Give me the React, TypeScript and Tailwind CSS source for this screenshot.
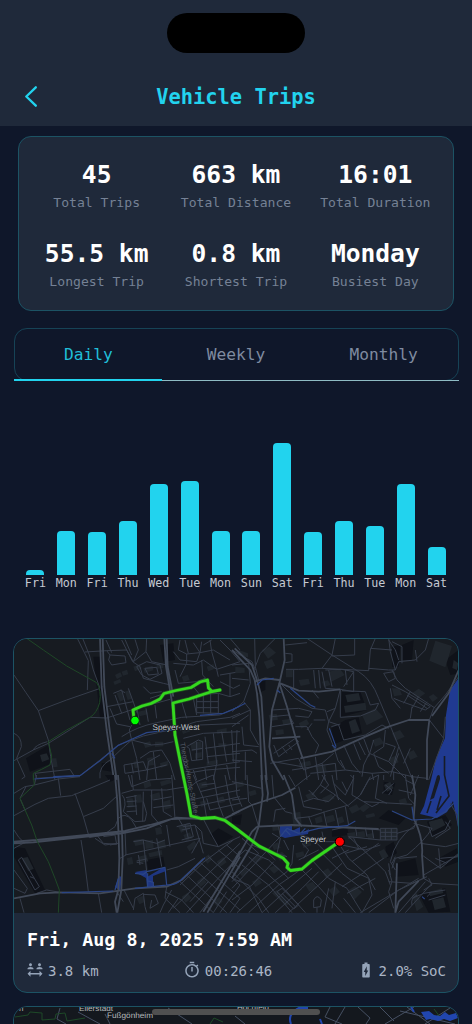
import { MdBatteryChargingFull, MdOutlineTimer, MdSocialDistance } from 'react-icons/md';

const stats = [
  { value: '45', label: 'Total Trips' },
  { value: '663 km', label: 'Total Distance' },
  { value: '16:01', label: 'Total Duration' },
  { value: '55.5 km', label: 'Longest Trip' },
  { value: '0.8 km', label: 'Shortest Trip' },
  { value: 'Monday', label: 'Busiest Day' },
];

const bars = [
  { day: 'Fri', height: 4.7 },
  { day: 'Mon', height: 43.7 },
  { day: 'Fri', height: 43 },
  { day: 'Thu', height: 53.7 },
  { day: 'Wed', height: 91 },
  { day: 'Tue', height: 93.7 },
  { day: 'Mon', height: 43.3 },
  { day: 'Sun', height: 43.7 },
  { day: 'Sat', height: 132 },
  { day: 'Fri', height: 43 },
  { day: 'Thu', height: 53.7 },
  { day: 'Tue', height: 48.7 },
  { day: 'Mon', height: 91 },
  { day: 'Sat', height: 27.7 },
];

// Each tile is drawn at 3x and placed on the map by x / y.
const tiles = [
  {
    x: 0,
    y: 630,
    dark: 'M78 385L145 345L155 400L90 425ZM305 400L335 395L335 425L305 420ZM480 45L520 40L525 90L490 95ZM280 80L305 80L325 260L300 262Z',
    buildings:
      'M120 375l20-5 8 18-22 8zM155 385l14 0 4 25-14 2zM345 135l16-8 6 12-16 8zM365 125l16-6 4 14-16 4zM400 110l20-8 5 14-20 8zM430 115l28-8 2 14-26 8zM470 100l20 0 0 14-20 2zM350 190l14-6 8 25-12 6zM375 185l12-4 8 25-12 4zM415 245l25-6 4 14-25 6zM340 155l20-8 4 10-20 8zM430 340l20-6 6 14-20 6zM465 335l25 0 0 14-25 2zM570 340l34-6 2 24-30 6zM585 370l20-4 0 16-20 4zM545 300l24-8 2 12-22 8zM400 395l14-2 4 20-14 2zM440 385l18-4 4 24-16 2zM480 400l24-8 2 14-24 8zM620 110l20-8 5 14-20 8zM545 140l18-6 6 16-18 6zM650 300l30-6 0 12-28 6zM655 340l24 0 0 12-24 0zM620 395l34-6 0 14-34 4z',
    green: 'M80 25L130 60L200 108L290 158Q305 180 299 218Q290 250 270 262L200 300L145 335L155 378L150 405L125 418L100 430V450',
    blue: 'M240 437L300 392L355 346L390 330L440 308L490 302L530 300M600 256L670 250L700 238L720 228M335 370L345 385M160 440L240 437',
    major: 'M300 25L305 170L320 300L342 450M308 25L313 170L329 300L350 450M493 25L498 110L514 205L525 285M500 25L503 110L520 200',
    streets: [
      'M232 25L265 92L262 180M248 25L268 75L280 120L300 175M42 135L78 188L115 242L145 330L152 380L165 450M115 242L200 210L298 176M255 66L320 62L380 60L400 95M42 392L100 360L145 340L270 262L320 264L400 238L510 208',
      'M42 310Q65 320 64 350L50 385L75 440L65 447M105 430L210 418L222 437L110 445ZM100 360Q105 345 142 335M365 320Q410 290 470 278L545 262L660 255L720 228M240 437L300 390L355 345L430 318L500 302L590 275L690 262L720 250',
      'M318 30L335 68M330 75L375 78L378 98L335 105L326 90ZM330 75L320 62M365 30L380 60L398 95L420 110L430 145L490 160L512 165M375 28L395 75M405 28L415 60L400 95M440 25L438 65L400 95M438 65L455 95L500 105',
      'M410 110L440 95L480 105L486 130L450 148L425 135ZM435 115L470 112L475 132L445 135ZM340 190L365 180L390 270M360 180L375 188M385 175L412 250M330 235L350 282L390 290M345 195L365 250M320 230L400 215M412 240L420 285M438 235L445 275M465 225L470 265M430 170L450 190L485 185',
      'M450 205L510 185M520 100L580 105L610 90L650 118L720 95M525 120L535 160L590 155L615 145M540 30L535 60L560 72L600 68L640 60L690 90M520 65L540 90L590 95L600 68L605 35M560 72L560 100L540 140M630 30L635 65L650 118L655 140M605 90L608 135L640 170M555 30L565 70',
      'M590 195L655 190L655 250L590 248ZM610 195V250M632 190V250M590 215H655M590 233H655M660 135L720 125M660 155L700 175L720 165M655 190L690 200L720 190M690 130L690 200',
      'M660 30L690 60L720 95M690 25L720 60M610 45L635 30M580 38L600 68M395 330L388 300L395 285M395 330L410 385L420 450M395 330L455 345L490 342L520 335M420 385L450 365L485 360L510 400L525 450M372 405L430 395L440 420L375 430L372 405M395 400L400 430M300 445Q295 410 330 390L370 352L395 330',
      'M540 300L600 285L720 280M550 325L610 310L720 305M560 350L595 330L608 335L608 388L575 392L568 355ZM575 360L608 355M590 335V390M545 380L560 420L720 395M615 320L625 400M640 310L650 400L640 450M665 305L680 395M695 300L700 395M560 430L620 420L720 412M580 420L590 450M615 415L620 450M680 405L690 450M615 355L720 340M620 380L720 370',
      'M440 420L500 405M460 365L470 450M440 450L445 395L480 375M545 215L560 265M580 205L590 255M540 180L580 170L600 195',
    ],
  },
  {
    x: 232,
    y: 630,
    dark: 'M330 185L385 185L405 240L325 262ZM340 270L380 262L390 310L300 345L298 295ZM510 45L545 30L540 90L510 90ZM480 50L505 45L500 110L480 110ZM640 90L680 60L680 130L655 135ZM70 150L100 150L100 180L75 190Z',
    buildings:
      'M610 32L660 48L640 112L592 92ZM665 90l14 10-4 20-14-6zM90 60l22-10 20 18-24 18zM95 95l25-8 10 20-25 10zM162 120l20 0 0 22-20 0zM200 150l30-4 4 16-28 6zM290 125l34-8 14 18-40 20zM270 155l18-4 8 14-20 6zM340 195l40-6 6 22-40 6zM336 228l64-10 4 22-64 8zM390 255l40-20 24 26-50 25zM350 275l20-8 14 36-24 8zM110 255l24-4 4 18-24 4zM150 270l24-4 4 16-24 4zM130 300l24-2 2 14-24 4zM200 280l24-12 8 14-24 14zM540 190l20-14 20 14-22 16zM590 200l14-8 14 12-16 12zM480 175l22 0 8 20-24 4zM420 330l24-8 12 18-26 10zM480 310l24-10 14 20-28 12zM525 370l20-10 12 20-22 10zM470 385l22-8 8 20-22 8zM200 400l34-8 4 14-34 8zM250 410l30-4 4 18-30 6zM20 60l28 10 0 12-30-6zM10 110l28 4 0 14-28 2z',
    green: '',
    blue: 'M135 180L145 188M75 165L90 150L125 145M175 175L235 225L250 232M292 295L312 350M300 345L312 355M0 240L40 220',
    major:
      'M0 60L25 88L55 120L68 150L75 190L82 260L85 330L90 450M8 55L60 105L78 160L88 200L96 330L104 450M155 25L158 90L142 160L120 240L112 350L120 390L155 450M142 160L165 230L190 320L212 385M120 325L205 320M205 385L300 365L400 320L470 290L530 270L592 270M145 160L200 182L260 185L325 178M68 155L100 145L142 150M592 270L585 330L585 450M680 120L650 190L600 258',
    streets: [
      'M225 25L300 75L380 125Q420 150 440 205L480 300L540 445M0 60L60 95L70 120M0 105L50 100L55 160L35 215L0 245M35 215L55 240L55 300L80 345M0 145L50 150M68 25L70 110L80 150M160 45L225 38M130 25L85 70L70 110',
      'M310 25L300 75L270 115L200 118L162 118M270 115L410 122L415 60L430 25M368 25L368 75L300 78M410 115L470 120L490 120L475 65L470 25M490 120L500 95L550 90L580 60L590 25M270 125L280 175L325 178L310 235L285 245M185 120V175M280 120L330 118L365 125L335 170',
      'M365 125L365 185L325 178L325 262M325 262L385 258L430 240L440 220L415 225L400 185L330 182M160 70L180 72L180 95L160 98M145 160L190 205L240 235L280 240L290 275L285 300L305 350L318 392L335 415M310 235L290 275M290 275L320 285L335 330M298 290L325 282M240 180L260 205M260 120L265 175',
      'M120 240L200 235L240 245L230 262L190 258M120 260L170 255L185 280L120 290M190 290L225 290L240 320L260 345L250 370M245 270L280 270M225 300L240 280M125 345L140 380L200 335L190 325L125 370M150 350L165 370M170 345L180 360M0 265L55 240M0 290L50 255M10 450L15 300M30 290L35 345L80 350',
      'M335 330L400 315L450 285L470 295M335 345L360 400L385 430M365 340L385 390M380 335L400 375M395 325L412 370M410 380L425 330M412 370L470 395L520 445M425 370L440 410L470 430M390 440L395 405L412 370M460 300L455 350L425 370M470 395L490 350L460 340',
      'M480 120L495 150L520 175L610 235M455 130L485 125L490 145L470 155L455 130M480 165L520 185L595 230L580 240L510 215L485 205M535 185L515 220M560 200L540 235M585 215L565 245M525 195L585 235M475 175L480 205L505 235M540 230L535 265L530 270M592 270L605 235L640 195L680 140M592 270L635 325L615 380L590 450',
      'M325 390L340 420L420 430L480 425L540 440L585 445M0 365L60 360L75 370M0 390L60 395M40 365V450M115 400L200 385L215 420L270 400L305 370M215 385L225 450M270 400L280 450M180 420L310 400M250 380L260 450M310 400L315 450M125 395L210 410M235 430L340 420M455 435V450M420 430L425 450M485 425V450M500 370L480 425M475 440L500 350M535 355L515 400M635 325L640 260',
      'M480 35L510 50L510 100M470 30L490 60L500 90M415 55L480 60M555 95L550 60M245 120L250 175M340 120L345 165M290 120L300 170',
    ],
  },
  {
    x: 0,
    y: 775,
    dark: 'M42 215L75 220L135 345L105 355L42 245ZM440 255L490 245L495 275L445 285ZM315 0L345 0L345 15L330 20ZM630 180L655 160L700 185L655 212Z',
    buildings:
      'M400 195l30-4 4 16-28 6zM435 198l24-4 2 24-24 4zM465 160l18-4 4 20-18 4zM470 200l24-6 4 24-24 6zM415 245l24-6 6 20-26 6zM445 235l40-10 2 14-38 8zM380 250l16-4 4 20-16 4zM535 155l30-12 8 16-30 14zM550 180l20-8 8 18-20 8zM560 215l24-18 8 16-24 16zM600 80l16-4 6 14-18 6zM650 70l20-6 6 16-20 6zM450 60l28-8 4 16-28 8zM490 80l20-6 4 24-20 6zM380 70l18 0 4 26-18 2zM405 60l18-2 4 24-18 2zM430 25l20-8 4 16-20 8zM480 20l30-8 4 12-30 10zM595 25l24-6 4 16-24 6zM65 250l18-4 18 35-16 8zM410 370l18-8 8 18-18 8zM610 250l16-12 12 14-16 14zM650 260l20-14 10 16-20 14zM590 320l18-14 12 16-18 14zM545 365l18-12 12 16-18 14zM640 380l18-14 10 14-18 14z',
    green: 'M100 0L103 30L60 70L95 150L112 200L145 260L165 310L178 345L175 413',
    blue: 'M103 12L240 2M185 353L340 348M405 340L520 328Q535 325 550 308L615 248M345 345L355 310M405 295L430 298L440 290L495 277L500 330M443 295V335M445 318L460 322V335',
    major: 'M345 0L352 80L355 165L358 250L355 345L345 380L350 413M354 0L360 75L366 165L368 250L364 345L352 413M42 205L100 202L260 185L365 175L440 160L515 132L570 130M42 200L110 195L260 180L375 168L450 150L530 128L600 132L675 130L720 108M42 370L120 355L180 352L300 355L405 340L500 335L545 315L610 252M610 410L720 228M622 413L720 245',
    streets: [
      'M42 55L75 35L103 30L175 12L240 5M42 122L105 88L145 70L215 62L270 40L330 15M225 55L250 125L268 188M250 125L310 100L352 62M175 10L182 62M103 30L110 0M60 70L78 35M62 75L75 105M42 165Q55 190 75 205M42 220L75 202M268 188L310 180L345 155L355 130',
      'M243 195L255 270L265 350M295 355L305 413M42 340L75 355L82 340L42 285M60 370L72 413M55 255L65 247L118 335L105 345L55 255M90 305L103 310M110 355L140 345L180 352M355 130Q375 110 395 135L410 160M310 185L345 180L350 208L310 205L290 180M285 190L315 210L350 205M330 210L355 205',
      'M365 55L400 45L500 45L560 35M365 60Q375 65 375 90L370 110L405 140L435 138L440 115L430 80M400 45L395 0M430 50L428 140M455 45L455 120L485 155M485 40L490 110L515 125M385 0L395 35L450 15L515 10M515 0L525 130M380 80L410 78M380 95L410 93M380 110L410 108M378 68L410 62M405 60L410 120M460 75L515 65M460 98L520 90',
      'M570 75L720 45M580 95L720 65M580 0L610 70L620 130M560 45L590 20L640 0M640 0L655 85L670 125M675 0L690 80L700 110M605 30L645 25M600 50L720 22M620 70L630 105L720 85M585 118L610 132L635 180L655 215L720 185M535 130L550 155L585 150L605 170L610 205L655 215M585 150L610 235',
      'M375 240L430 228L500 212L600 190M430 195L440 290M470 190L485 275M500 150L510 215M375 170L378 240L360 250M400 200L430 195L470 205L495 195M410 258L440 252M415 240L420 270M430 265L410 262M370 380L350 350M372 345L400 400M405 370L430 355L435 395M430 358L465 360L475 385L450 400L455 375',
      'M500 335L495 370L540 413M495 350L545 375L580 413M540 320L600 375L640 413M560 300L650 385L680 413M580 280L720 405M600 262L720 370M625 245L720 330M655 225L720 280M680 210L720 245M720 205L600 320L520 400M700 195L610 262L540 330M720 240L650 315L560 413M655 340L600 413M680 350L640 413M720 330L660 413M515 345L490 390L480 413M535 370L505 413M720 370L690 413M625 320L570 380',
      'M500 285L535 275L585 250M530 155L570 145L580 185L545 195M545 165L570 160M555 150L565 190M400 405L405 370M435 395L440 413M575 235L600 190',
    ],
  },
  {
    x: 232,
    y: 775,
    dark: 'M495 265L550 250L560 300L490 305ZM460 215L485 200L495 235L465 250ZM560 355L640 340L655 410L590 413ZM440 130L470 105L520 130L500 150ZM620 250L675 220L680 260L640 275ZM300 165L345 155L350 180L300 185ZM0 125L30 118L25 150L0 145ZM455 20L490 25L480 60L455 55ZM585 140L640 120L660 150L600 185Z',
    buildings:
      'M180 115L205 110L210 155L185 158ZM445 160L495 158L495 195L445 195ZM248 130l20-8 4 18-20 6zM280 125l24-6 6 18-24 8zM315 130l16-6 6 16-18 8zM350 100l24-12 10 16-24 12zM345 175l24-4 4 18-24 4zM375 172l22-4 4 18-22 4zM405 178l18-4 4 16-18 4zM440 230l16-8 14 22-18 10zM350 345l20-12 20 18-24 24zM540 360l14-5 20 40-20 14zM590 350l40-10 4 14-40 10zM600 375l34-8 8 30-34 8zM590 140l40-10 10 20-40 20zM210 205l24-8 4 14-24 8zM130 240l20-10 14 14-20 14zM60 250l20-12 14 12-20 14zM110 280l20-10 14 12-18 14zM190 235l24-6 4 14-24 6zM20 290l20-12 10 12-20 14zM60 320l20-10 10 14-20 12zM120 355l14-10 40 40-12 8zM220 330l22-10 14 18-24 12zM270 290l18-10 14 18-20 12zM290 345l20-12 14 18-20 14zM380 100l20-14 14 10-20 16zM400 120l26-6 4 10-26 6zM220 60l24-10 8 14-24 10zM270 70l28-14 10 14-28 14zM120 150l18-4 4 20-20 2zM120 210l18-8 8 16-20 8zM10 25l22-6 4 14-22 6zM50 50l20-6 4 14-20 6zM500 75l20-6 6 14-22 6zM455 30l20-10 10 20-20 10z',
    green: '',
    blue: 'M480 108L540 135L600 132L640 110L665 85M145 185L165 160L200 175L260 160L345 152L370 138M150 180L160 165L175 180M205 175L220 160M540 95L545 130M570 365L578 372',
    major: 'M88 0L92 60L80 155L60 210L0 310M100 0L108 55L105 80M0 118L60 90L150 60L190 38M155 0L180 60L190 130L210 155M75 155L180 150L340 158L440 162M540 0L550 60L545 130Q575 190 570 240L575 310M495 265L490 413M560 318L500 380L490 413M0 275L60 170L75 155',
    streets: [
      'M0 20L50 30L88 40M10 0L15 60L30 95M45 0L50 80L60 90M0 75L45 70M60 90L80 155M120 0L125 65L160 110L180 115M190 130L235 125L280 110L350 90L385 60L415 5M170 0L190 35L215 15L235 0M200 35L215 95L270 105M215 80L245 70L290 80L310 60L350 95M230 45L260 75M240 60L265 30L280 0M265 30L310 60M300 0L305 25L340 60L365 10L355 0',
      'M365 0L360 60L395 80L540 88M385 60L410 15L440 0M440 0L430 70L465 85M520 0L530 70L550 90M560 0L535 60M395 80L420 95L440 85M230 125L240 150M275 110L285 155M310 105L320 155M340 95L350 150M300 165L345 155L445 165M350 185L445 195M370 155L375 185M400 158L405 185M420 160L425 190',
      'M445 160H495V195H445ZM460 160V195M478 160V195M445 172H495M445 184H495M495 175L545 160L555 135M550 150Q490 190 475 260L490 285M545 145L600 160Q580 195 525 240L490 250L480 280M565 205L640 215L680 205M570 240L625 280L680 235M575 300L680 240M575 310L600 325L680 330M575 310L540 325L470 320',
      'M0 340L70 265L130 200L150 180M0 310L50 330L90 413M0 260L40 225L110 255L170 310M30 190L80 235L0 320M60 210L130 240M30 270L110 330L180 413M50 245L160 345L220 413M90 215L130 255M0 375L60 330L125 260M15 413L90 345L165 290M50 413L140 330L200 288M90 413L175 335L240 280M0 290L80 370L110 413M130 413L210 340L260 290M170 413L260 330L330 265',
      'M135 350L150 340L200 390L185 402ZM150 355L190 395M245 375Q255 355 268 375L265 395L245 398ZM255 397V413M210 285L260 335L330 413M240 255L290 310L345 340L390 413M270 235L330 295L395 345M300 215L345 280L410 310L420 360L390 413M320 205L350 250L405 300L430 345M350 185L410 240L460 290L475 330',
      'M205 180L270 200L320 200M270 170L275 195M210 205L230 225L215 250M255 205L285 235M330 210L400 225L445 210M365 190L380 220M340 235L405 215M300 250L350 225M360 260L440 205M395 290L455 250M330 335L400 290M345 355L430 310M385 413L560 310M410 413L500 345L585 305M335 370L370 413M290 340L275 413M310 320L300 400',
      'M500 413L580 320M520 413L600 325M540 370L575 355L640 345M585 365L595 355M590 375L640 360M540 390Q535 370 555 360M480 265L490 245M470 285L480 320L470 350L485 400M470 265L475 300M640 140L655 160L610 190M590 155L600 185L640 165L655 135M610 250L645 265M620 220L625 280M625 250L680 245M500 250L555 245M590 310L600 330L575 345M655 85L675 120L680 160',
      'M130 105L160 100M130 105L125 140M120 175L145 190L135 235L165 245M155 195L170 225M185 210L180 265L165 290M200 255L260 225M140 155L145 185M520 15L550 30M500 45L545 55M460 30L480 45L470 60M450 55L485 25M270 0L290 30L265 55M305 25L320 75M330 20L345 50',
    ],
  },
];

const ROUTE =
  'M134 719L133 710L142 706L151 703.5L160 699L164 693.5L176 690.5L191 687.5L200 682L207.5 680L208.5 688L212 691.5L220 690L212 691.5L189 699L173 703L175 735L181 765L187 794L191 816L201 818.5L215 817.5L225 820.5L238 830L259 846L283 858L288 863.5L287 867.5L290.5 870.5L302 869L312 860.5L339 842';

function TripMap() {
  return (
    <svg viewBox="14 639 444 274" className="block h-[274px] w-full shrink-0" preserveAspectRatio="none">
      <rect x="14" y="639" width="444" height="274" fill="#171b21" />
      {/* Rhine and harbour */}
      <path
        d="M458 679L450 690L446 715L445 738L436 758L431 780L424 806L420 814L437 818L447 812L453 801L458 827Z"
        fill="#203a91"
      />
      <path d="M437 776Q440 773 440 779L434 798L430 800Z" fill="#171c26" />
      <path d="M444.5 756V775L449 796L436 813M431 801L427 813M441 796L437 810" fill="none" stroke="#171c26" strokeWidth="1.6" />
      <path
        d="M280 826L292 825L292 831L300 827L300 834L309 829L308 834L296 836L285 838L280 836ZM135 872L147 870L147 877L164 867L166 871L153 876L153 886L147 887L146 878ZM115 887L119 876L122 877L120 891Z"
        fill="#203d9c"
        opacity=".8"
      />
      {tiles.map((t) => (
        <g key={`${t.x}-${t.y}`} transform={`translate(${t.x} ${t.y}) scale(.33333)`} fill="none" strokeLinejoin="round">
          <path d={t.dark} fill="#0f1219" />
          <path d={t.buildings} fill="#20262d" />
          {t.streets.map((d) => (
            <path key={d} d={d} stroke="#363d4b" strokeWidth="3" />
          ))}
          <path d={t.major} stroke="#414958" strokeWidth="5.4" />
          <path d={t.green} stroke="#1f4727" strokeWidth="3" />
          <path d={t.blue} stroke="#2b4585" strokeWidth="3.6" />
        </g>
      ))}
      <g fill="#565d67" fontFamily="Liberation Sans, Arial, sans-serif" fontSize="7">
        <text transform="translate(180 743) rotate(79)" textLength="72" textRendering="geometricPrecision">
          Theodor-Heuss-Straße
        </text>
      </g>
      <path d={ROUTE} fill="none" stroke="#2c8a20" strokeWidth="4" strokeLinejoin="round" opacity=".5" />
      <path d={ROUTE} fill="none" stroke="#35d91f" strokeWidth="2.8" strokeLinejoin="round" strokeLinecap="round" />
      <circle cx="135" cy="720.5" r="4.3" fill="#00ff00" stroke="#0b220e" strokeWidth="1" />
      <circle cx="339.8" cy="841.7" r="4.6" fill="#ff0000" stroke="#000" strokeWidth="1" />
      <g
        fill="#c4c7cb"
        stroke="#171b21"
        strokeWidth="1.5"
        paintOrder="stroke"
        fontFamily="Liberation Sans, Arial, sans-serif"
        fontSize="8.2"
        textRendering="geometricPrecision"
      >
        <text x="152.5" y="730.3" textLength="47" lengthAdjust="spacingAndGlyphs">
          Speyer-West
        </text>
        <text x="300" y="841.8" textLength="26" lengthAdjust="spacingAndGlyphs">
          Speyer
        </text>
      </g>
    </svg>
  );
}

function NextTripMap() {
  return (
    <svg viewBox="14 1007 444 17" className="block h-[17px] w-full" preserveAspectRatio="none">
      <rect x="14" y="1007" width="444" height="17" fill="#14181e" />
      <path
        d="M60 1008L57 1019L66 1024M78 1012L100 1024M105 1014L110 1024M168 1008L192 1024M235 1016L245 1024M330 1007L325 1017L342 1024M345 1007L335 1024M358 1007L370 1018L366 1024M380 1007L394 1021M385 1024L414 1007M407 1007L430 1024M400 1011L455 1024M425 1024L450 1008"
        fill="none"
        stroke="#465063"
      />
      <path
        d="M15 1017L28 1015L30 1012L42 1013L42 1020L55 1019L56 1014L65 1013L67 1021L85 1018M210 1024L214 1018L223 1022M434 1009L440 1017L450 1016"
        fill="none"
        stroke="#1e4928"
      />
      <path
        d="M291 1024Q287 1014 299 1008L308 1008M320 1019L322 1024M411 1007L414 1012"
        fill="none"
        stroke="#2146ae"
        strokeWidth="2"
      />
      <path d="M421 1012L429 1011L434 1015L440 1016L445 1012L449 1015L456 1013L458 1018L450 1021L444 1019L438 1021L430 1019L426 1020Z" fill="#2146ae" />
      <g
        fill="#b5b8bc"
        stroke="#14181e"
        strokeWidth="1"
        paintOrder="stroke"
        fontFamily="Liberation Sans, Arial, sans-serif"
        fontSize="8"
        textRendering="geometricPrecision"
      >
        <text x="19" y="1010.5">
          n
        </text>
        <text x="79" y="1010.5" textLength="34" lengthAdjust="spacingAndGlyphs">
          Ellerstadt
        </text>
        <text x="107" y="1018" textLength="46" lengthAdjust="spacingAndGlyphs">
          Fußgönheim
        </text>
        <text x="237" y="1010" textLength="32" lengthAdjust="spacingAndGlyphs">
          Hochfeld
        </text>
      </g>
    </svg>
  );
}

export default function App() {
  return (
    <div className="relative h-[1024px] w-[472px] overflow-hidden bg-[#0f172a] font-['DejaVu_Sans_Mono',monospace]">
      <header className="flex h-[126px] flex-col items-center bg-[#1f293a] pt-[12.5px]">
        <div className="h-10 w-[138px] shrink-0 rounded-full bg-black" />
        <div className="mt-[23px] grid h-[42px] w-full grid-cols-[60px_1fr_60px] items-center">
          <svg
            viewBox="0 0 12 21"
            className="mb-px ml-[25px] h-[21px] w-3"
            fill="none"
            stroke="#22d3ee"
            strokeWidth="2.3"
            strokeLinecap="round"
            strokeLinejoin="round"
          >
            <path d="M10.8 1.3L1.3 10.5L10.8 19.7" />
          </svg>
          <h1 className="pt-px text-center text-[20.4px] font-bold text-[#22d3ee]">Vehicle Trips</h1>
        </div>
      </header>

      <section className="mx-[18px] mt-[9.5px] grid h-[175px] grid-cols-3 content-start gap-y-[27px] rounded-[13px] border border-[#1c5364] bg-[#1f293a] px-2 pt-[22px]">
        {stats.map(({ value, label }) => (
          <div key={label} className="flex h-[52px] flex-col items-center whitespace-nowrap">
            <span className="text-[24.6px] leading-8 font-bold text-white">{value}</span>
            <span className="mt-[3px] text-[13.1px] leading-[17px] text-[#758195]">{label}</span>
          </div>
        ))}
      </section>

      <nav className="mx-[13.5px] mt-[17.5px] h-[53px]">
        <div className="grid h-[53px] grid-cols-3 rounded-[13px] border border-[#164356] pt-px text-[16.2px] text-[#7f8ba0]">
          <button className="text-[#20bfd9]">Daily</button>
          <button>Weekly</button>
          <button>Monthly</button>
        </div>
        <div className="relative -mt-0.5 grid h-0.5 grid-cols-3 items-end">
          <div className="h-0.5 bg-[#22d3ee]" />
          <div className="col-span-2 h-px bg-[#8fbcc4]" />
        </div>
      </nav>

      <section className="mt-[50.5px] grid h-[160px] grid-cols-14 items-end px-5">
        {bars.map(({ day, height }, i) => (
          <div key={i} className="flex flex-col items-center">
            <div className="w-[18px] rounded-t-[4px] bg-[#22d3ee]" style={{ height }} />
            <span className="h-[17px] text-[11.7px] leading-[17px] text-[#c5cad2]">{day}</span>
          </div>
        ))}
      </section>

      <article className="mx-[13px] mt-[46px] h-[355px] overflow-hidden rounded-[14px] border border-[#1c5364] bg-[#1f293a]">
        <TripMap />
        <div className="px-3">
          <h2 className="mt-[15px] pl-px text-[18.35px] leading-6 font-bold whitespace-nowrap text-white">Fri, Aug 8, 2025 7:59 AM</h2>
          <div className="mt-[9.5px] flex h-5 items-center justify-between text-[14px] text-[#aab5c5]">
            <span className="flex items-center gap-1">
              <MdSocialDistance size={18} className="mb-0.5 text-[#94a3b8]" />
              3.8 km
            </span>
            <span className="flex items-center gap-1">
              <MdOutlineTimer size={18} className="mb-0.5 text-[#94a3b8]" />
              00:26:46
            </span>
            <span className="flex items-center gap-1">
              <MdBatteryChargingFull size={18} className="mb-0.5 text-[#94a3b8]" />
              2.0% SoC
            </span>
          </div>
        </div>
      </article>

      <article className="mx-[13px] mt-[13px] h-[355px] overflow-hidden rounded-[14px] border border-[#1c5364] bg-[#1f293a]">
        <NextTripMap />
      </article>

      {/* home indicator */}
      <div className="absolute top-[1009px] left-[152px] h-[6px] w-[168px] rounded-full bg-[#505050]" />
    </div>
  );
}
